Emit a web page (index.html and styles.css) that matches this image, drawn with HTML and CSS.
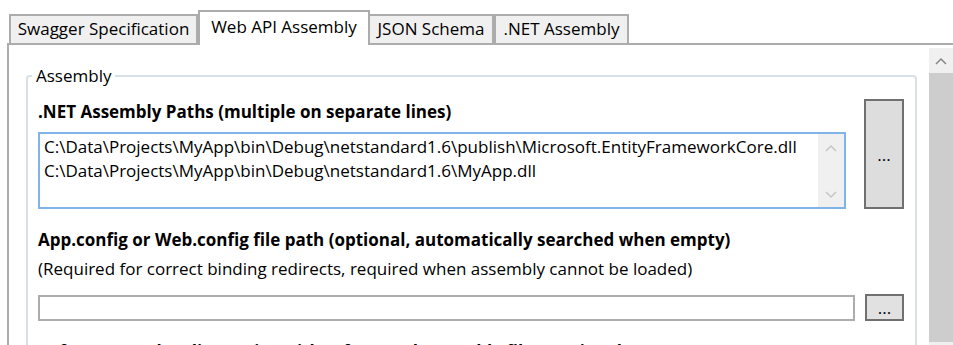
FILE: index.html
```html
<!DOCTYPE html>
<html lang="en">
<head>
    <meta charset="UTF-8">
    <title>Web API Assembly</title>
    <link rel="stylesheet" href="styles.css">
</head>
<body>
    <div class="window">
        <div class="tabs">
            <div class="tab tab-swagger">Swagger Specification</div>
            <div class="tab tab-webapi active">Web API Assembly</div>
            <div class="tab tab-json">JSON Schema</div>
            <div class="tab tab-net">.NET Assembly</div>
        </div>

        <div class="panel">
            <div class="scroll-content">
                <fieldset class="group">
                    <legend>Assembly</legend>

                    <div class="paths-row">
                        <div class="paths-col">
                            <div class="label bold">.NET Assembly Paths (multiple on separate lines)</div>
                            <div class="textarea">
                                <div class="textarea-text">C:\Data\Projects\MyApp\bin\Debug\netstandard1.6\publish\Microsoft.EntityFrameworkCore.dll
C:\Data\Projects\MyApp\bin\Debug\netstandard1.6\MyApp.dll</div>
                                <div class="ta-scroll">
                                    <svg width="12" height="8" viewBox="0 0 12 8"><polyline points="1,7 6,2 11,7" fill="none" stroke="#c6c6c6" stroke-width="1.5"/></svg>
                                    <svg width="12" height="8" viewBox="0 0 12 8"><polyline points="1,1 6,6 11,1" fill="none" stroke="#c6c6c6" stroke-width="1.5"/></svg>
                                </div>
                            </div>
                        </div>
                        <div class="browse big">...</div>
                    </div>

                    <div class="label bold label-config">App.config or Web.config file path (optional, automatically searched when empty)</div>
                    <div class="label label-hint">(Required for correct binding redirects, required when assembly cannot be loaded)</div>
                    <div class="config-row">
                        <div class="textbox"></div>
                        <div class="browse small">...</div>
                    </div>

                    <div class="label bold label-refs">Reference paths (directories with referenced assembly files, optional)</div>
                </fieldset>
            </div>
            <div class="scrollbar">
                <div class="sb-up">
                    <svg width="12" height="8" viewBox="0 0 12 8"><polyline points="1,7 6,2 11,7" fill="none" stroke="#868686" stroke-width="1.5"/></svg>
                </div>
                <div class="sb-thumb"></div>
            </div>
        </div>
    </div>
</body>
</html>
```

FILE: styles.css
```css
body
{
    margin: 0;
    height: 345px;
    overflow: hidden;
    background: #fff;
    color: #000;
    font-family: "Segoe UI", "Open Sans", "Noto Sans", sans-serif;
    font-size: 17px;
}

.window
{
    height: 345px;
    display: flex;
    flex-direction: column;
}

/* tab strip */
.tabs
{
    display: flex;
    align-items: flex-end;
    height: 33px;
    padding: 10px 0 0 9px;
}

.tab
{
    box-sizing: border-box;
    height: 29px;
    border: 2px solid #acacac;
    border-bottom: 0;
    background: #f0f0f0;
    display: flex;
    align-items: center;
    justify-content: center;
    white-space: nowrap;
    padding-bottom: 2px;
}

.tab-swagger { width: 189px; }
.tab-webapi  { width: 172px; }
.tab-json    { width: 126px; }
.tab-net     { width: 135px; }

.tab.active
{
    height: 35px;
    background: #fff;
    margin: 0 -2px -2px 0;
    padding-bottom: 5px;
    position: relative;
    z-index: 1;
}

/* tab content */
.panel
{
    flex: 1;
    display: flex;
    margin-left: 7px;
    border-top: 2px solid #acacac;
    border-left: 2px solid #acacac;
    min-height: 0;
}

.scroll-content
{
    flex: 1;
    min-width: 0;
}

.scrollbar
{
    width: 24px;
    margin-top: 3px;
    background: #f0f0f0;
    display: flex;
    flex-direction: column;
}

.sb-up
{
    height: 25px;
    display: flex;
    align-items: center;
    justify-content: center;
}

.sb-thumb
{
    height: 269px;
    background: #cdcdcd;
}

/* group box */
.group
{
    margin: 21px 12px 0 17px;
    border: 2px solid #d8e1e8;
    border-radius: 4px;
    padding: 13px 11px 0 10px;
    min-width: 0;
}

.group legend
{
    line-height: 20px;
    padding: 0 4px;
    margin-left: -6px;
}

.label
{
    line-height: 25px;
    white-space: nowrap;
}

.bold
{
    font-weight: bold;
}

.paths-row
{
    display: flex;
    gap: 18px;
}

.paths-col
{
    flex: 1;
}

.paths-col .label
{
    margin-bottom: 8px;
}

.textarea
{
    box-sizing: border-box;
    height: 77px;
    border: 2px solid #7eb4ea;
    background: #fff;
    display: flex;
}

.textarea-text
{
    flex: 1;
    padding: 1px 0 0 4px;
    line-height: 24px;
    white-space: pre;
    overflow: hidden;
}

.ta-scroll
{
    width: 26px;
    background: #f0f0f0;
    display: flex;
    flex-direction: column;
    justify-content: space-between;
    align-items: center;
    padding: 10px 0 8px;
}

.browse
{
    box-sizing: border-box;
    border: 2px solid #707070;
    background: #dddddd;
    display: flex;
    align-items: center;
    justify-content: center;
}

.browse.big
{
    width: 40px;
    height: 110px;
}

.browse.small
{
    width: 39px;
    height: 27px;
    background: #e1e1e1;
}

.label-config
{
    margin-top: 18px;
}

.label-hint
{
    margin-top: 4px;
}

.config-row
{
    display: flex;
    align-items: flex-end;
    gap: 10px;
    margin-top: 13px;
}

.textbox
{
    flex: 1;
    box-sizing: border-box;
    height: 26px;
    border: 2px solid #adadad;
    background: #fff;
}

.label-refs
{
    margin-top: 18px;
}
```
